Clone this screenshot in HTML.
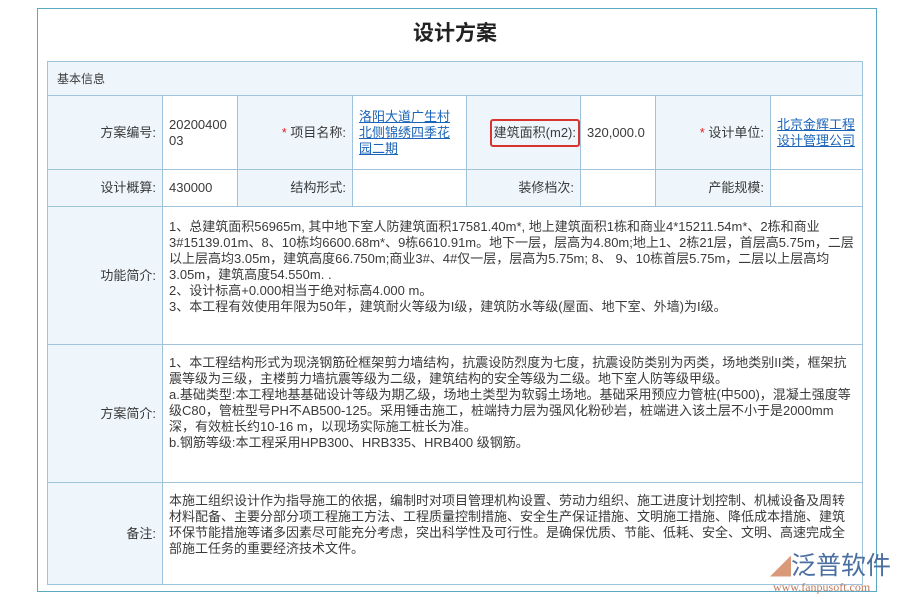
<!DOCTYPE html>
<html><head><meta charset="utf-8"><style>
body{margin:0;width:900px;height:600px;background:#fff;position:relative;overflow:hidden;font-family:"Liberation Sans","Noto Sans CJK SC",sans-serif;color:#3a3a3a;font-size:13px}
.frame{position:absolute;left:37px;top:8px;width:840px;height:584px;border:1px solid #5aa9c2;box-sizing:border-box}
h1{position:absolute;left:0;width:910px;top:17px;margin:0;text-align:center;font-size:21px;font-weight:bold;color:#222}
table{position:absolute;left:47px;top:61px;width:815px;border-collapse:collapse;table-layout:fixed}
td{border:1px solid #9ec3da;padding:0 6px;line-height:16px;vertical-align:middle}
.l{background:#eef6fc;text-align:right}
.hd{background:#eef6fc;height:33px;text-align:left;padding-left:9px;font-size:12px}
a{color:#1a64b8;text-decoration:underline}
.s{color:#d22}
.box{display:inline-block;border:2px solid #d9332e;border-radius:3px;padding:4px 2px;margin-right:-6px}
.t{vertical-align:top;padding-top:10px}
</style></head><body>
<div class="frame"></div>
<h1>设计方案</h1>
<table>
<colgroup><col style="width:115px"><col style="width:75px"><col style="width:115px"><col style="width:114px"><col style="width:114px"><col style="width:75px"><col style="width:115px"><col style="width:92px"></colgroup>
<tr><td colspan="8" class="hd">基本信息</td></tr>
<tr style="height:74px"><td class="l">方案编号:</td><td>20200400<br>03</td><td class="l"><span class="s">*</span> 项目名称:</td><td><a>洛阳大道广生村北侧锦绣四季花园二期</a></td><td class="l"><span class="box">建筑面积(m2):</span></td><td>320,000.0</td><td class="l"><span class="s">*</span> 设计单位:</td><td><a>北京金辉工程设计管理公司</a></td></tr>
<tr style="height:37px"><td class="l">设计概算:</td><td>430000</td><td class="l">结构形式:</td><td></td><td class="l">装修档次:</td><td></td><td class="l">产能规模:</td><td></td></tr>
<tr style="height:137px"><td class="l">功能简介:</td><td colspan="7" class="t" style="padding-top:12px;height:125px">1、总建筑面积56965m, 其中地下室人防建筑面积17581.40m*, 地上建筑面积1栋和商业4*15211.54m*、2栋和商业3#15139.01m、8、10栋均6600.68m*、9栋6610.91m。地下一层，层高为4.80m;地上1、2栋21层，首层高5.75m，二层以上层高均3.05m，建筑高度66.750m;商业3#、4#仅一层，层高为5.75m; 8、 9、10栋首层5.75m，二层以上层高均3.05m，建筑高度54.550m. .<br>2、设计标高+0.000相当于绝对标高4.000 m。<br>3、本工程有效使用年限为50年，建筑耐火等级为I级，建筑防水等级(屋面、地下室、外墙)为I级。</td></tr>
<tr style="height:138px"><td class="l">方案简介:</td><td colspan="7" class="t" style="height:126px">1、本工程结构形式为现浇钢筋砼框架剪力墙结构，抗震设防烈度为七度，抗震设防类别为丙类，场地类别II类，框架抗震等级为三级，主楼剪力墙抗震等级为二级，建筑结构的安全等级为二级。地下室人防等级甲级。<br>a.基础类型:本工程地基基础设计等级为期乙级，场地土类型为软弱土场地。基础采用预应力管桩(中500)，混凝土强度等级C80，管桩型号PH不AB500-125。采用锤击施工，桩端持力层为强风化粉砂岩，桩端进入该土层不小于是2000mm深，有效桩长约10-16 m，以现场实际施工桩长为准。<br>b.钢筋等级:本工程采用HPB300、HRB335、HRB400 级钢筋。</td></tr>
<tr style="height:102px"><td class="l">备注:</td><td colspan="7" class="t" style="height:90px">本施工组织设计作为指导施工的依据，编制时对项目管理机构设置、劳动力组织、施工进度计划控制、机械设备及周转材料配备、主要分部分项工程施工方法、工程质量控制措施、安全生产保证措施、文明施工措施、降低成本措施、建筑环保节能措施等诸多因素尽可能充分考虑，突出科学性及可行性。是确保优质、节能、低耗、安全、文明、高速完成全部施工任务的重要经济技术文件。</td></tr>
</table>
<div style="position:absolute;left:770px;top:551px;font-size:25px;color:#4b6fa0;line-height:30px"><span style="color:#d99a7a;font-size:21px">◢</span>泛普软件</div>
<div style="position:absolute;left:773px;top:580px;font-size:12px;color:#c0785a;font-family:'Liberation Serif',serif">www.fanpusoft.com</div>
</body></html>
